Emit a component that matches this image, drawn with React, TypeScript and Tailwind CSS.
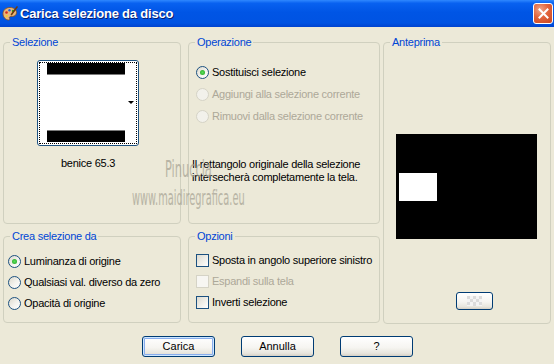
import React from 'react';

const font = { fontFamily: '"Liberation Sans", Arial, sans-serif' };

function Radio({ label, checked, disabled }: { label: string; checked?: boolean; disabled?: boolean }) {
  return (
    <div className="flex items-center h-[21px]">
      <span
        className={`flex items-center justify-center w-[13px] h-[13px] rounded-full border shrink-0 ${
          disabled
            ? 'border-[#d5d3c6] bg-[#f2f1eb]'
            : 'border-[#1c5180] bg-[linear-gradient(135deg,#dcd9cd_0%,#f4f3ee_55%,#ffffff_100%)]'
        }`}
      >
        {checked && <span className="w-[5px] h-[5px] rounded-full bg-[radial-gradient(circle,#5ade5a_0%,#21a121_100%)]" />}
      </span>
      <span className={`ml-[3px] whitespace-nowrap ${disabled ? 'text-[#aca899]' : 'text-black'}`}>{label}</span>
    </div>
  );
}

function Check({ label, disabled }: { label: string; disabled?: boolean }) {
  return (
    <div className="flex items-center h-[21px]">
      <span
        className={`w-[13px] h-[13px] border shrink-0 ${
          disabled
            ? 'border-[#d5d3c6] bg-[#f7f6f2]'
            : 'border-[#1c5180] bg-[linear-gradient(135deg,#dcdad0_0%,#f2f1ec_60%,#ffffff_100%)]'
        }`}
      />
      <span className={`ml-[3px] whitespace-nowrap ${disabled ? 'text-[#aca899]' : 'text-black'}`}>{label}</span>
    </div>
  );
}

function Group({ title, className, children }: { title: string; className: string; children?: React.ReactNode }) {
  return (
    <fieldset className={`border border-[#d0d0bf] rounded-[4px] ${className}`}>
      <legend className="ml-[6px] px-[2px] text-[#0046d5] leading-[13px]">{title}</legend>
      {children}
    </fieldset>
  );
}

function XpButton({ label, focused, className = '' }: { label: React.ReactNode; focused?: boolean; className?: string }) {
  return (
    <button
      className={`flex items-center justify-center border border-[#003c74] rounded-[3px] bg-[linear-gradient(180deg,#ffffff_0%,#f6f5f1_55%,#e8e6de_85%,#d6d0c5_100%)] text-black ${
        focused ? 'shadow-[inset_0_0_0_1px_#cee7ff,inset_0_0_0_2px_#89adec]' : ''
      } ${className}`}
    >
      {label}
    </button>
  );
}

function PaletteIcon() {
  return (
    <svg width="16" height="16" viewBox="0 0 16 16">
      <path d="M8 1.5C3.8 1.5 1 4.3 1 7.8c0 3.2 2.6 6.2 5.6 6.2 1.2 0 1.4-.9.9-1.7-.5-.9.1-1.9 1.3-1.9h1.6c2.4 0 4.1-1.5 4.1-3.8C14.5 3.8 11.8 1.5 8 1.5z" fill="#e9b67a" stroke="#8a4f1c" strokeWidth="0.8" />
      <circle cx="4.5" cy="6.5" r="1.3" fill="#d62b1e" />
      <circle cx="7.5" cy="4.3" r="1.2" fill="#2a62d8" />
      <circle cx="11" cy="5" r="1.2" fill="#2a9d2a" />
      <circle cx="4.8" cy="10" r="1.1" fill="#f2d21c" />
      <path d="M15 1 9.5 8.5" stroke="#6b3b12" strokeWidth="1.6" strokeLinecap="round" />
    </svg>
  );
}

export default function App() {
  return (
    <div className="relative w-[554px] h-[364px] overflow-hidden bg-[#ece9d8] text-[11px] tracking-[-0.25px]" style={font}>
      {/* Title bar */}
      <div className="flex items-center justify-between h-[27px] pl-[2px] pr-[1px] bg-[linear-gradient(180deg,#2f88ff_0%,#0861f0_12%,#0055e5_45%,#0053e2_85%,#0043cf_100%)]">
        <div className="flex items-center">
          <PaletteIcon />
          <span className="ml-[2px] text-white font-bold text-[13px] tracking-[-0.2px] [text-shadow:1px_1px_0_#0a1f6e]">
            Carica selezione da disco
          </span>
        </div>
        <button className="flex items-center justify-center w-[20px] h-[21px] rounded-[3px] border border-white bg-[radial-gradient(circle_at_35%_30%,#f0a68a_0%,#e2643c_45%,#c74521_100%)]">
          <svg width="11" height="11" viewBox="0 0 11 11">
            <path d="M1.5 1.5l8 8M9.5 1.5l-8 8" stroke="white" strokeWidth="2" strokeLinecap="square" />
          </svg>
        </button>
      </div>

      {/* Body */}
      <div className="flex pt-[9px] pl-[3px]">
        <div className="flex flex-col w-[178px]">
          <Group title="Selezione" className="h-[188px]">
            <div className="ml-[33px] mt-[11px] flex flex-col items-center w-[102px]">
              <div className="w-[102px] h-[86px] border border-[#1c5180] rounded-[3px] bg-white p-[1px]">
                <div className="relative h-full border border-dotted border-black flex flex-col pb-[1px]">
                  <div className="ml-[7px] w-[78px] h-[12px] bg-black border-b border-[#7a7a7a]" />
                  <div className="flex-1" />
                  <div className="ml-[7px] w-[78px] h-[12px] bg-black border-t border-[#7a7a7a]" />
                  <span className="absolute right-[2px] top-[38px] w-0 h-0 border-l-[3px] border-r-[3px] border-t-[3px] border-l-transparent border-r-transparent border-t-black" />
                </div>
              </div>
              <div className="mt-[11px] leading-[13px] text-black">benice 65.3</div>
            </div>
          </Group>
          <Group title="Crea selezione da" className="h-[93px] mt-[6px]">
            <div className="pl-[4px] mt-[8px]">
              <Radio label="Luminanza di origine" checked />
              <Radio label="Qualsiasi val. diverso da zero" />
              <Radio label="Opacità di origine" />
            </div>
          </Group>
        </div>

        <div className="flex flex-col w-[192px] ml-[7px]">
          <Group title="Operazione" className="h-[188px]">
            <div className="pl-[7px] mt-[12px] flex flex-col">
              <div className="h-[22px] flex items-center"><Radio label="Sostituisci selezione" checked /></div>
              <div className="h-[22px] flex items-center"><Radio label="Aggiungi alla selezione corrente" disabled /></div>
              <div className="h-[22px] flex items-center"><Radio label="Rimuovi dalla selezione corrente" disabled /></div>
            </div>
            <p className="pl-[3px] mt-[31px] leading-[13px] text-black">
              Il rettangolo originale della selezione
              <br />
              intersecherà completamente la tela.
            </p>
          </Group>
          <Group title="Opzioni" className="h-[93px] mt-[6px]">
            <div className="pl-[7px] mt-[7px]">
              <Check label="Sposta in angolo superiore sinistro" />
              <Check label="Espandi sulla tela" disabled />
              <Check label="Inverti selezione" />
            </div>
          </Group>
        </div>

        <Group title="Anteprima" className="w-[168px] h-[288px] ml-[3px]">
          <div className="ml-[12px] mt-[85px] w-[141px] h-[105px] bg-black pt-[39px] pl-[3px]">
            <div className="w-[38px] h-[28px] bg-white" />
          </div>
          <XpButton
            className="ml-[72px] mt-[53px] w-[37px] h-[18px]"
            label={
              <svg width="15" height="10" viewBox="0 0 15 10">
                <rect width="15" height="10" fill="#f4f4f4" />
                <rect x="0" y="0" width="3" height="3" fill="#dcdcdc" />
                <rect x="6" y="0" width="3" height="3" fill="#dcdcdc" />
                <rect x="12" y="0" width="3" height="3" fill="#dcdcdc" />
                <rect x="3" y="3" width="3" height="3" fill="#dcdcdc" />
                <rect x="9" y="3" width="3" height="3" fill="#dcdcdc" />
                <rect x="0" y="6" width="3" height="3" fill="#dcdcdc" />
                <rect x="6" y="6" width="3" height="4" fill="#dcdcdc" />
                <rect x="12" y="6" width="3" height="3" fill="#dcdcdc" />
              </svg>
            }
          />
        </Group>
      </div>

      {/* Buttons */}
      <div className="flex justify-center gap-[26px] mt-[12px] pl-[1px] tracking-normal">
        <XpButton label="Carica" focused className="w-[73px] h-[21px]" />
        <XpButton label="Annulla" className="w-[73px] h-[21px]" />
        <XpButton label="?" className="w-[73px] h-[21px]" />
      </div>

      {/* Watermark */}
      <div
        className="absolute left-[132px] top-[158px] pointer-events-none text-[#a39f90] opacity-70 leading-none tracking-normal"
        style={{ fontFamily: '"DejaVu Sans Condensed", "Liberation Sans Narrow", sans-serif' }}
      >
        <div className="ml-[33px] text-[23px] scale-x-[0.55] origin-left whitespace-nowrap">Pinuccia</div>
        <div className="mt-[7px] text-[21px] scale-x-[0.52] origin-left whitespace-nowrap">www.maidiregrafica.eu</div>
      </div>
    </div>
  );
}
